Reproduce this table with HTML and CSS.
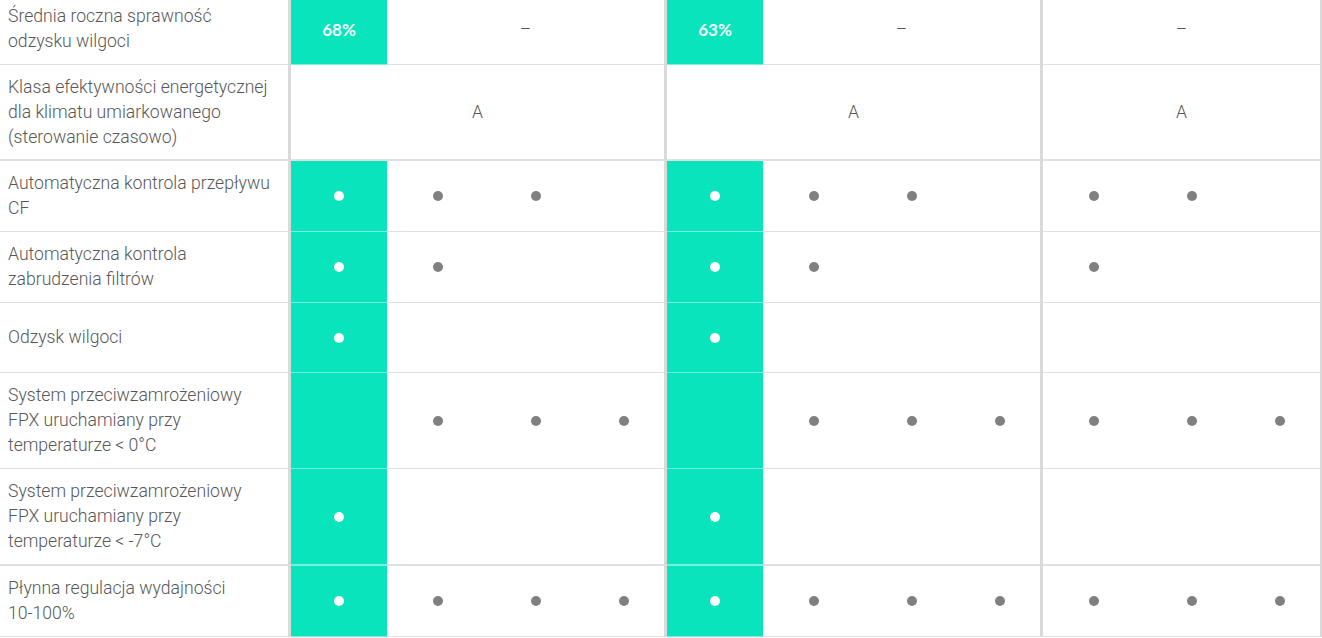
FILE: index.html
```html
<!DOCTYPE html>
<html lang="pl">
<head>
<meta charset="utf-8">
<title>Porównanie</title>
<link rel="stylesheet" href="styles.css">
</head>
<body>
<div class="table">
  <div class="row">
    <div class="label">Średnia roczna sprawność<br>odzysku wilgoci</div>
    <div class="group">
      <div class="cell c1 green"><span class="pct">68%</span></div>
      <div class="cell span">–</div>
    </div>
    <div class="group">
      <div class="cell c1 green"><span class="pct">63%</span></div>
      <div class="cell span">–</div>
    </div>
    <div class="group last">
      <div class="cell span">–</div>
    </div>
  </div>

  <div class="row thick tight">
    <div class="label">Klasa efektywności energetycznej<br>dla klimatu umiarkowanego<br>(sterowanie czasowo)</div>
    <div class="group"><div class="cell span">A</div></div>
    <div class="group"><div class="cell span">A</div></div>
    <div class="group last"><div class="cell span">A</div></div>
  </div>

  <div class="row">
    <div class="label">Automatyczna kontrola przepływu<br>CF</div>
    <div class="group">
      <div class="cell c1 green"><i class="dot"></i></div>
      <div class="cell c2"><i class="dot"></i></div>
      <div class="cell c3"><i class="dot"></i></div>
      <div class="cell c4"></div>
    </div>
    <div class="group">
      <div class="cell c1 green"><i class="dot"></i></div>
      <div class="cell c2"><i class="dot"></i></div>
      <div class="cell c3"><i class="dot"></i></div>
      <div class="cell c4"></div>
    </div>
    <div class="group last">
      <div class="cell d1"><i class="dot"></i></div>
      <div class="cell d2"><i class="dot"></i></div>
      <div class="cell d3"></div>
    </div>
  </div>

  <div class="row">
    <div class="label">Automatyczna kontrola<br>zabrudzenia filtrów</div>
    <div class="group">
      <div class="cell c1 green"><i class="dot"></i></div>
      <div class="cell c2"><i class="dot"></i></div>
      <div class="cell c3"></div>
      <div class="cell c4"></div>
    </div>
    <div class="group">
      <div class="cell c1 green"><i class="dot"></i></div>
      <div class="cell c2"><i class="dot"></i></div>
      <div class="cell c3"></div>
      <div class="cell c4"></div>
    </div>
    <div class="group last">
      <div class="cell d1"><i class="dot"></i></div>
      <div class="cell d2"></div>
      <div class="cell d3"></div>
    </div>
  </div>

  <div class="row short">
    <div class="label">Odzysk wilgoci</div>
    <div class="group">
      <div class="cell c1 green"><i class="dot"></i></div>
      <div class="cell span"></div>
    </div>
    <div class="group">
      <div class="cell c1 green"><i class="dot"></i></div>
      <div class="cell span"></div>
    </div>
    <div class="group last">
      <div class="cell span"></div>
    </div>
  </div>

  <div class="row">
    <div class="label">System przeciwzamrożeniowy<br>FPX uruchamiany przy<br>temperaturze &lt; 0°C</div>
    <div class="group">
      <div class="cell c1 green"></div>
      <div class="cell c2"><i class="dot"></i></div>
      <div class="cell c3"><i class="dot"></i></div>
      <div class="cell c4"><i class="dot"></i></div>
    </div>
    <div class="group">
      <div class="cell c1 green"></div>
      <div class="cell c2"><i class="dot"></i></div>
      <div class="cell c3"><i class="dot"></i></div>
      <div class="cell c4"><i class="dot"></i></div>
    </div>
    <div class="group last">
      <div class="cell d1"><i class="dot"></i></div>
      <div class="cell d2"><i class="dot"></i></div>
      <div class="cell d3"><i class="dot"></i></div>
    </div>
  </div>

  <div class="row thick">
    <div class="label">System przeciwzamrożeniowy<br>FPX uruchamiany przy<br>temperaturze &lt; -7°C</div>
    <div class="group">
      <div class="cell c1 green"><i class="dot"></i></div>
      <div class="cell span"></div>
    </div>
    <div class="group">
      <div class="cell c1 green"><i class="dot"></i></div>
      <div class="cell span"></div>
    </div>
    <div class="group last">
      <div class="cell span"></div>
    </div>
  </div>

  <div class="row">
    <div class="label">Płynna regulacja wydajności<br>10-100%</div>
    <div class="group">
      <div class="cell c1 green"><i class="dot"></i></div>
      <div class="cell c2"><i class="dot"></i></div>
      <div class="cell c3"><i class="dot"></i></div>
      <div class="cell c4"><i class="dot"></i></div>
    </div>
    <div class="group">
      <div class="cell c1 green"><i class="dot"></i></div>
      <div class="cell c2"><i class="dot"></i></div>
      <div class="cell c3"><i class="dot"></i></div>
      <div class="cell c4"><i class="dot"></i></div>
    </div>
    <div class="group last">
      <div class="cell d1"><i class="dot"></i></div>
      <div class="cell d2"><i class="dot"></i></div>
      <div class="cell d3"><i class="dot"></i></div>
    </div>
  </div>
</div>
</body>
</html>
```

FILE: styles.css
```css
html, body {
  margin: 0;
  padding: 0;
  background: #ffffff;
}

body {
  font-family: Roboto, "Liberation Sans", sans-serif;
  font-weight: 300;
  font-size: 17.6px;
  color: #575757;
  overflow: hidden;
}

.table {
  margin-top: -6px;
  width: 1322px;
}

.row {
  display: grid;
  grid-template-columns: 288px 376px 376px 282px;
}

.label {
  display: flex;
  align-items: center;
  min-height: 50px;
  padding: 10px 2px 10px 8px;
  line-height: 25px;
  white-space: nowrap;
  border-bottom: 1px solid #e0e0e0;
}

.row.tight .label {
  padding-bottom: 9px;
}

.row.short .label {
  min-height: 49px;
}

.group {
  display: flex;
  border-left: 3px solid #dadada;
}

.group.last {
  border-right: 2px solid #dadada;
}

.cell {
  display: flex;
  align-items: center;
  justify-content: center;
  border-bottom: 1px solid #e0e0e0;
  flex: none;
}

.cell.span {
  flex: 1 1 auto;
}

.row.thick .label,
.row.thick .cell {
  border-bottom-width: 2px;
}

.c1 { width: 96px; }
.c2 { width: 101px; }
.c3 { width: 95px; }
.c4 { width: 81px; }

.d1 { width: 102px; }
.d2 { width: 94px; }
.d3 { width: 81px; }

.green {
  background: #0ae4bc;
  border-bottom-color: rgba(255, 255, 255, 0.45);
  color: #ffffff;
}

.pct {
  font-family: Lato, "Open Sans", sans-serif;
  font-weight: 700;
  font-size: 17px;
  color: #f4fffc;
}

.dot {
  display: block;
  width: 10px;
  height: 10px;
  border-radius: 50%;
  background: #808080;
}

.green .dot {
  background: #ffffff;
}
```
